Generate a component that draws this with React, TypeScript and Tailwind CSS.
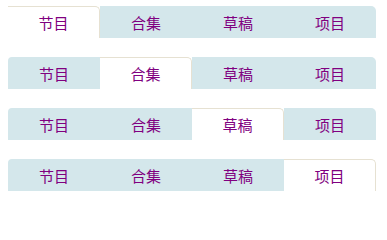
const tabs = ["节目", "合集", "草稿", "项目"];

function TabBar({ active }: { active: number }) {
  return (
    <div className="flex h-[32px] w-[368px]">
      {tabs.map((t, i) => {
        const on = i === active;
        const first = i === 0;
        const last = i === tabs.length - 1;
        return (
          <div
            key={t}
            className={[
              "flex w-[92px] items-center justify-center text-[15px] leading-none text-[#800080]",
              on
                ? "border-t border-r border-[#e6e1d2] bg-white rounded-tr-[5px]"
                : "bg-[#d4e7eb]",
              first && !on ? "rounded-tl-[4px]" : "",
              last && !on ? "rounded-tr-[5px]" : "",
            ].join(" ")}
          >
            <span className={on ? "-mt-[1px]" : ""}>{t}</span>
          </div>
        );
      })}
    </div>
  );
}

export default function App() {
  return (
    <div className="flex h-[202px] w-[387px] flex-col gap-[19px] bg-white px-[8px] pt-[6px] font-['Noto_Sans_CJK_SC','Noto_Sans',sans-serif]">
      {[0, 1, 2, 3].map((a) => (
        <TabBar key={a} active={a} />
      ))}
    </div>
  );
}
